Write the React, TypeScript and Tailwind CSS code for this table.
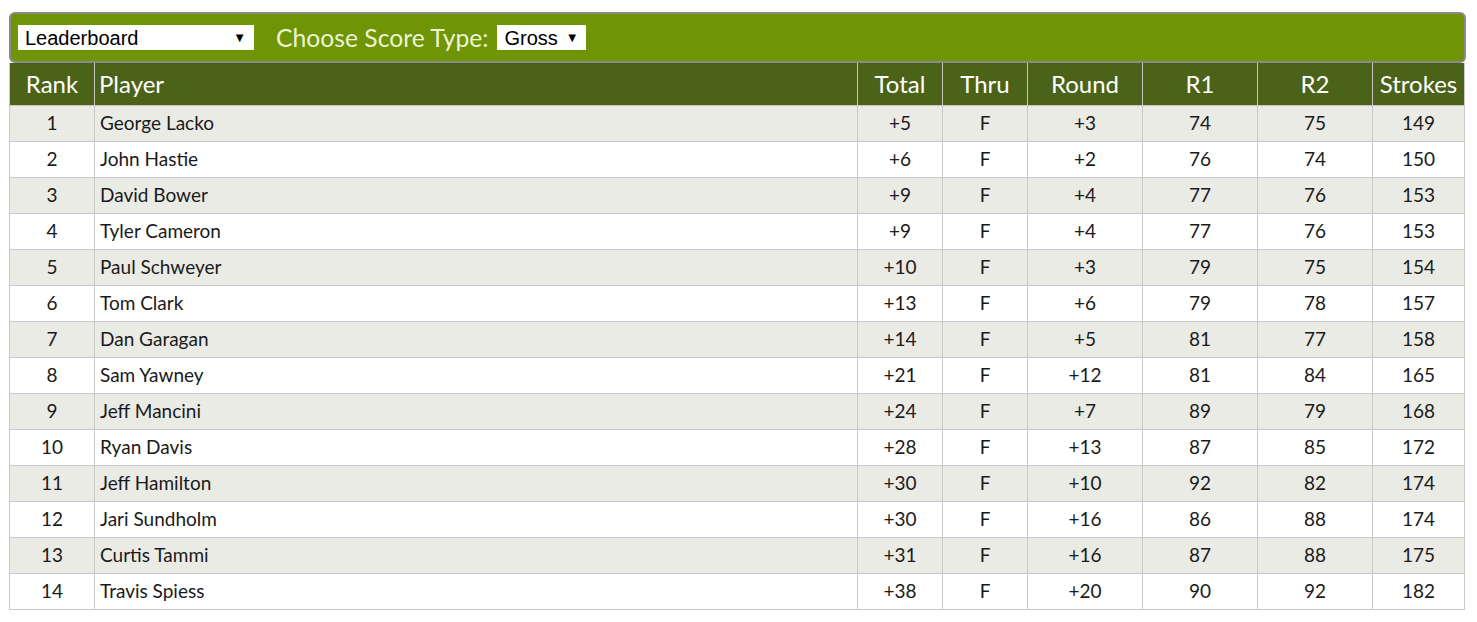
const players = [
  [1, 'George Lacko', '+5', 'F', '+3', 74, 75, 149],
  [2, 'John Hastie', '+6', 'F', '+2', 76, 74, 150],
  [3, 'David Bower', '+9', 'F', '+4', 77, 76, 153],
  [4, 'Tyler Cameron', '+9', 'F', '+4', 77, 76, 153],
  [5, 'Paul Schweyer', '+10', 'F', '+3', 79, 75, 154],
  [6, 'Tom Clark', '+13', 'F', '+6', 79, 78, 157],
  [7, 'Dan Garagan', '+14', 'F', '+5', 81, 77, 158],
  [8, 'Sam Yawney', '+21', 'F', '+12', 81, 84, 165],
  [9, 'Jeff Mancini', '+24', 'F', '+7', 89, 79, 168],
  [10, 'Ryan Davis', '+28', 'F', '+13', 87, 85, 172],
  [11, 'Jeff Hamilton', '+30', 'F', '+10', 92, 82, 174],
  [12, 'Jari Sundholm', '+30', 'F', '+16', 86, 88, 174],
  [13, 'Curtis Tammi', '+31', 'F', '+16', 87, 88, 175],
  [14, 'Travis Spiess', '+38', 'F', '+20', 90, 92, 182],
]

const cols = [
  { label: 'Rank', w: 'w-[85px]' },
  { label: 'Player', w: 'w-[763px]' },
  { label: 'Total', w: 'w-[85px]' },
  { label: 'Thru', w: 'w-[85px]' },
  { label: 'Round', w: 'w-[115px]' },
  { label: 'R1', w: 'w-[115px]' },
  { label: 'R2', w: 'w-[115px]' },
  { label: 'Strokes', w: 'w-[92px]' },
]

export default function App() {
  return (
    <div className="min-h-[622px] bg-white pt-[12px] pl-[9px] font-['Lato','Open_Sans',sans-serif]">
      <div className="w-[1457px] h-[51px] rounded-[6px] border-2 border-[#8a8a8a] bg-[#6f9406] flex items-center pl-[7px]">
        <div className="w-[236px] h-[25px] bg-white flex items-center justify-between pl-[7px] pr-[8px] font-['Liberation_Sans',sans-serif] text-[20px] text-black">
          <span>Leaderboard</span>
          <span className="text-[13px]">▼</span>
        </div>
        <span className="ml-[22px] text-[24.7px] text-[#eef4d2]">Choose Score Type:</span>
        <div className="ml-[8px] w-[89px] h-[25px] bg-white flex items-center justify-between pl-[8px] pr-[7px] font-['Liberation_Sans',sans-serif] text-[20px] text-black">
          <span>Gross</span>
          <span className="text-[13px]">▼</span>
        </div>
      </div>
      <table className="w-[1455px] table-fixed border-collapse text-[19px] text-[#1a1a1a]">
        <thead>
          <tr className="h-[42px] bg-[#4b6318] text-white">
            {cols.map((c) => (
              <th
                key={c.label}
                className={`${c.w} border border-[#c9c9c9] border-t-0 px-[4px] font-normal text-[24px] ${c.label === 'Player' ? 'text-left' : 'text-center'}`}
              >
                {c.label}
              </th>
            ))}
          </tr>
        </thead>
        <tbody>
          {players.map((p, i) => (
            <tr key={p[0]} className={`h-[36px] ${i % 2 === 0 ? 'bg-[#ebebe6]' : 'bg-white'}`}>
              {p.map((v, j) => (
                <td
                  key={j}
                  className={`border border-[#c9c9c9] pt-[1px] ${j === 1 ? 'text-left px-[5px]' : 'text-center'}`}
                >
                  {v}
                </td>
              ))}
            </tr>
          ))}
        </tbody>
      </table>
    </div>
  )
}
